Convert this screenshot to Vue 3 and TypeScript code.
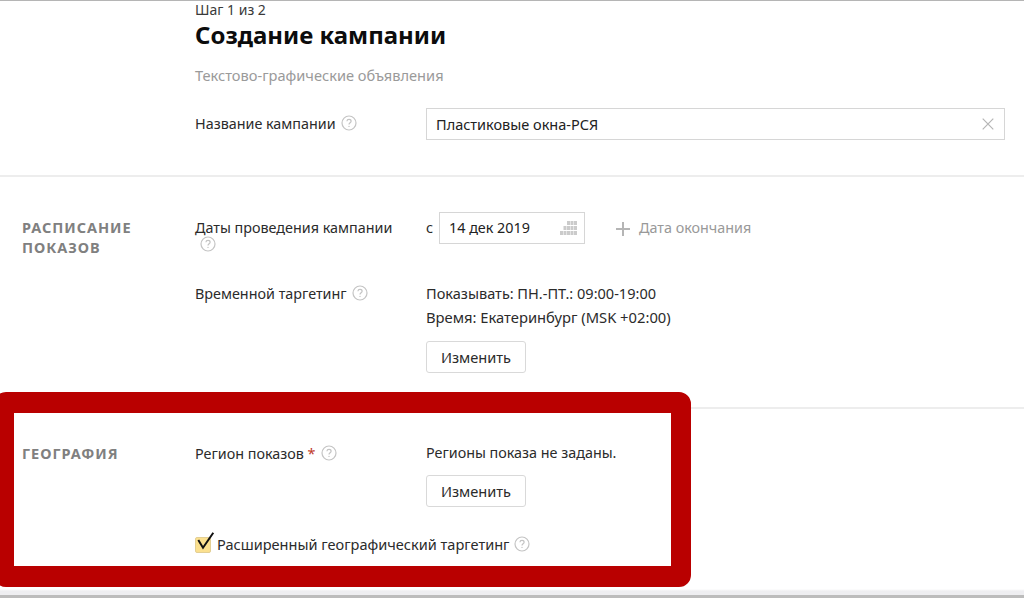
<script setup lang="ts">
const cal: [number, number][] = [
  [7, 0], [10.5, 0], [14, 0],
  [3.5, 5], [7, 5], [10.5, 5], [14, 5],
  [0, 10], [3.5, 10], [7, 10], [10.5, 10], [14, 10]
]
</script>

<template>
  <div class="page">
    <header class="head">
      <div class="step">Шаг 1 из 2</div>
      <h1 class="title">Создание кампании</h1>
      <div class="sub">Текстово-графические объявления</div>
      <div class="name-row">
        <div class="label">Название кампании <svg class="q" viewBox="0 0 16 16"><circle cx="8" cy="8" r="7" /><path d="M5.900 6.300C6 5 7 4.400 8 4.400c1.200 0 2.100.7 2.100 1.800 0 1.500-2.100 1.500-2.100 3.200" /><circle class="dot" cx="8" cy="11.400" r=".7" /></svg></div>
        <div class="input wide">
          <span class="name-text">Пластиковые окна-РСЯ</span>
          <svg class="x" viewBox="0 0 12 12"><path d="M.7.700l10.600 10.600M11.300.700L.7 11.300" /></svg>
        </div>
      </div>
    </header>

    <section class="section schedule">
      <div class="section-name">РАСПИСАНИЕ<br />ПОКАЗОВ</div>
      <div class="fields">
        <div class="row date-row">
          <div class="label date-label">Даты проведения кампании<br /><svg class="q first" viewBox="0 0 16 16"><circle cx="8" cy="8" r="7" /><path d="M5.900 6.300C6 5 7 4.400 8 4.400c1.200 0 2.100.7 2.100 1.800 0 1.500-2.100 1.500-2.100 3.200" /><circle class="dot" cx="8" cy="11.400" r=".7" /></svg></div>
          <div class="value date-value">
            <span class="from">с</span>
            <div class="input date">
              <span>14 дек 2019</span>
              <svg class="cal" viewBox="0 0 18 14"><rect v-for="c in cal" :key="c.join()" :x="c[0]" :y="c[1]" width="3" height="4" /></svg>
            </div>
            <span class="add"><svg class="plus" viewBox="0 0 14 14"><path d="M7 0v14M0 7h14" /></svg>Дата окончания</span>
          </div>
        </div>
        <div class="row">
          <div class="label time-label">Временной таргетинг <svg class="q" viewBox="0 0 16 16"><circle cx="8" cy="8" r="7" /><path d="M5.900 6.300C6 5 7 4.400 8 4.400c1.200 0 2.100.7 2.100 1.800 0 1.500-2.100 1.500-2.100 3.200" /><circle class="dot" cx="8" cy="11.400" r=".7" /></svg></div>
          <div class="value">
            <div class="line wide-text">Показывать: ПН.-ПТ.: 09:00-19:00</div>
            <div class="line zone-text">Время: Екатеринбург (MSK +02:00)</div>
            <button class="btn time-btn" type="button">Изменить</button>
          </div>
        </div>
      </div>
    </section>

    <section class="section geo">
      <div class="section-name">ГЕОГРАФИЯ</div>
      <div class="fields">
        <div class="row">
          <div class="label region-label">Регион показов <span class="req">*</span> <svg class="q" viewBox="0 0 16 16"><circle cx="8" cy="8" r="7" /><path d="M5.900 6.300C6 5 7 4.400 8 4.400c1.200 0 2.100.7 2.100 1.800 0 1.500-2.100 1.500-2.100 3.200" /><circle class="dot" cx="8" cy="11.400" r=".7" /></svg></div>
          <div class="value">
            <div class="geo-line">Регионы показа не заданы.</div>
            <button class="btn geo-btn" type="button">Изменить</button>
          </div>
        </div>
        <div class="check-row">
          <span class="check">
            <svg viewBox="0 0 20 20"><path d="M3.300 9l4.700 7.700L18.300 1.700" /></svg>
          </span>
          <span class="wide-text">Расширенный географический таргетинг</span>
          <svg class="q" viewBox="0 0 16 16"><circle cx="8" cy="8" r="7" /><path d="M5.900 6.300C6 5 7 4.400 8 4.400c1.200 0 2.100.7 2.100 1.800 0 1.500-2.100 1.500-2.100 3.200" /><circle class="dot" cx="8" cy="11.400" r=".7" /></svg>
        </div>
      </div>
    </section>

    <div class="highlight"></div>
    <div class="scrollbar"></div>
  </div>
</template>

<style>
html, body { margin: 0; background: #fff; }
</style>

<style scoped>
.page {
  position: relative;
  width: 1024px;
  height: 598px;
  overflow: hidden;
  background: #fff;
  border-top: 1px solid #b5b5b5;
  box-sizing: border-box;
  font-family: "Noto Sans", "Open Sans", sans-serif;
  font-size: 14.35px;
  line-height: 20px;
  color: #2b2b2b;
}
.head { padding-left: 195px; height: 174px; box-sizing: border-box; }
.step { color: #3a3a3a; height: 18px; line-height: 18px; font-size: 14px; }
.title { margin: 0; height: 32px; font-size: 24px; line-height: 32px; font-weight: 700; color: #0c0c0c; }
.sub { margin-top: 14px; color: #9a9a9a; font-size: 14.6px; }
.name-row { display: flex; align-items: center; margin-top: 23px; height: 32px; }
.label { width: 231px; flex: none; }
.input {
  display: flex;
  align-items: center;
  justify-content: space-between;
  box-sizing: border-box;
  height: 32px;
  border: 1px solid #d6d6d6;
  padding: 0 9px;
  color: #222;
  background: #fff;
}
.wide { width: 579px; padding-right: 10px; }
.name-text { font-size: 14.5px; margin-top: -1px; }
.x { width: 12px; height: 12px; fill: none; stroke: #b5b5b5; stroke-width: 1.200; }
.q { width: 16px; height: 16px; margin-left: 2px; vertical-align: -2px; fill: none; stroke: #c4c4c4; stroke-width: 1.200; }
.q.first { margin-left: 5px; }
.q .dot { fill: #c4c4c4; stroke: none; }
.section { display: flex; padding-left: 22px; box-sizing: border-box; border-top: 2px solid #ededed; }
.schedule { height: 232px; }
.geo { height: 180px; }
.section-name {
  width: 173px;
  flex: none;
  font-weight: 700;
  font-size: 14.5px;
  letter-spacing: .95px;
  color: #808080;
}
.schedule .section-name { padding-top: 40px; }
.geo .section-name { padding-top: 34px; }
.fields { flex: 1; }
.schedule .fields { padding-top: 35px; }
.geo .fields { padding-top: 34px; }
.row { display: flex; }
.date-row { height: 69px; }
.date-label { padding-top: 8px; line-height: 16px; box-sizing: border-box; }
.time-label { padding-top: 3px; }
.region-label { padding-top: 1px; box-sizing: border-box; }
.value { flex: 1; }
.date-value { display: flex; align-items: flex-start; }
.from { width: 13px; line-height: 32px; }
.date { width: 146px; padding-left: 9px; padding-right: 6px; }
.cal { width: 18px; height: 14px; fill: #cbcbcb; }
.add { display: flex; align-items: center; height: 32px; margin-left: 31px; color: #999; }
.plus { width: 14px; height: 14px; margin: 2px 9px 0 0; fill: none; stroke: #b5b5b5; stroke-width: 2; }
.line { height: 24px; line-height: 24px; }
.wide-text { font-size: 14.55px; }
.zone-text { font-size: 14.75px; }
.geo-line { height: 20px; }
.btn {
  display: block;
  box-sizing: border-box;
  width: 100px;
  height: 32px;
  border: 1px solid #d9d9d9;
  border-radius: 3px;
  background: #fff;
  color: #2b2b2b;
  font: inherit;
  font-size: 14.6px;
  padding: 0;
}
.time-btn { margin-top: 12px; }
.geo-btn { margin-top: 12px; }
.check-row { display: flex; align-items: center; margin-top: 27px; height: 20px; }
.check {
  position: relative;
  width: 16px;
  height: 16px;
  margin: 1px 6px 0 0;
  background: #fbe08f;
  border: 1px solid #e3cf94;
  border-radius: 2px;
  box-sizing: border-box;
}
.check svg {
  position: absolute;
  left: -1px;
  top: -7px;
  width: 20px;
  height: 20px;
  fill: none;
  stroke: #111;
  stroke-width: 2;
}
.check-row .q { margin-left: 5px; }
.req { color: #c0392b; }
.highlight {
  position: absolute;
  left: -6px;
  top: 391px;
  width: 697px;
  height: 195px;
  box-sizing: border-box;
  border: solid #b90000;
  border-width: 21px 20px 21px 20px;
  border-radius: 12px;
  pointer-events: none;
}
.scrollbar {
  position: absolute;
  left: 0;
  right: 0;
  bottom: 0;
  height: 9px;
  background: linear-gradient(#fff 0, #eeeef1 2px, #eeeef1 6px, #bcbcbc 6px);
}
</style>
